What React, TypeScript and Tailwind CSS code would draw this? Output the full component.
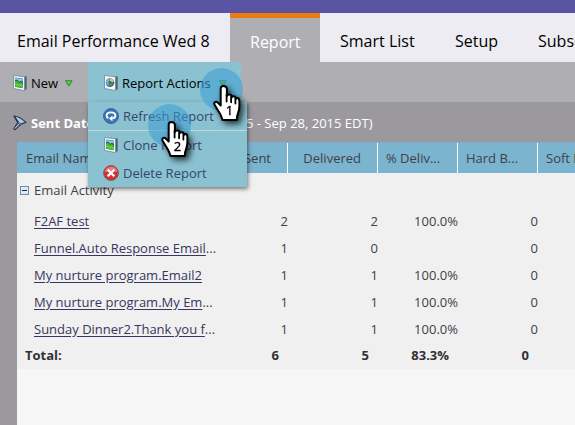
import type { ReactNode } from "react";

const rows = [
  { name: "F2AF test", more: false, values: ["2", "2", "100.0%", "0"] },
  { name: "Funnel.Auto Response Email", more: true, values: ["1", "0", "", "0"] },
  { name: "My nurture program.Email2", more: false, values: ["1", "1", "100.0%", "0"] },
  { name: "My nurture program.My Em", more: true, values: ["1", "1", "100.0%", "0"] },
  { name: "Sunday Dinner2.Thank you f", more: true, values: ["1", "1", "100.0%", "0"] },
];

const columns = "grid w-[621px] shrink-0 grid-cols-[181px_90px_90px_80px_80px_100px]";

function PictureIcon({ globe = false }: { globe?: boolean }) {
  return (
    <svg width="14" height="16" viewBox="0 0 14 16" className="shrink-0">
      <path d="M.5.5 11 1.7l2.5-.4v12.9L11 15.5.5 13.5z" fill="#f4f8fb" stroke="#70879a" strokeWidth=".8" />
      <path d="M11.3 1.8v13.4l2.2-1.3V1.4z" fill="#4c6272" />
      {globe ? (
        <g>
          <circle cx="6" cy="7.6" r="4.3" fill="#2a609c" />
          <path d="M2 6.5Q2.5 3.6 5 3.4L6 5 4.5 7.3l.7 3.7Q2 9.8 2 6.5z" fill="#7fb4d8" />
          <path d="M6 3.3Q9 3.5 10 6L8.4 7.6 6 6z" fill="#d4ce51" />
          <path d="m5.5 8 3.5.2-.8 2.3-2.3 1z" fill="#4c9b3c" />
        </g>
      ) : (
        <g>
          <path d="m1.9 2.6 8 1v9.6l-8-1.4z" fill="#3c78a8" />
          <path d="m2.2 3 7.4 1v2.5L8 5.5 6.5 7 4.2 4.7l-2 1.1z" fill="#8bcae8" />
          <path d="m2 6.2 2-1 2.3 2.5L8 6.5l1.8 2v4.6L2 11.7z" fill="#48b92d" />
          <path d="m2 6 2-1 2.4 2.4L8 6.2l1.8 2.3" fill="none" stroke="#185548" strokeWidth=".9" />
          <path d="m2 9 3 1.3 2-.5 2.8 2" stroke="#85df4b" strokeWidth=".9" fill="none" />
        </g>
      )}
    </svg>
  );
}

function DownArrow() {
  return (
    <svg width="8" height="7" viewBox="0 0 8 7" className="shrink-0">
      <path d="M.5.5h6.6L4.3 5.8h-.9z" fill="#3fa337" stroke="#3f9238" strokeWidth=".9" />
      <path d="M2 1.2h3.6L3.8 4.3z" fill="#70cc4c" />
    </svg>
  );
}

function Pointer({ number, className }: { number: string; className: string }) {
  return (
    <div className={`pointer-events-none absolute size-[43px] rounded-full bg-[#3a9fd5]/55 ${className}`}>
      <svg width="42" height="48" viewBox="0 0 42 48" className="absolute top-[16px] left-[12px] overflow-visible drop-shadow-[3px_3px_3px_rgba(0,0,0,0.75)]">
        <path
          d="M11.2 2Q8.7 2 8.7 4.5v17L6 18.8Q4.3 17 2.8 18.2q-1.2 1.2.2 3.3l5 8.2q1.6 3 2.5 6.3h14.2q.2-4 1.5-7.3 1.2-3 1.2-6.7v-5Q27.2 14 25.4 14q-1.2 0-1.7 1v-.8q0-2-2-2-1.7 0-2.1 1.2v-.7q0-2.1-2.3-2.1-2 0-2.4 1.5V4.5Q14.5 2 11.2 2z"
          fill="white"
          stroke="black"
          strokeWidth="2"
          strokeLinejoin="round"
        />
        <path d="M14.6 10.5v7M19.1 12.8v5.5M23.4 15v4.5" stroke="black" strokeWidth="1.8" strokeLinecap="round" />
        <text x="17.5" y="31" textAnchor="middle" fontFamily="Noto Sans, sans-serif" fontSize="13" fill="black" stroke="black" strokeWidth=".3">
          {number}
        </text>
      </svg>
    </div>
  );
}

function MenuItem({ icon, children, className }: { icon: ReactNode; children: ReactNode; className: string }) {
  return (
    <div className={`flex items-center pl-[15px] ${className}`}>
      <span className="flex w-5 items-center">{icon}</span>
      <span>{children}</span>
    </div>
  );
}

function ActionsMenu() {
  return (
    <div className="relative z-10 h-10 w-[153px] bg-[#8ac2d2]">
      <div className="flex h-10 items-center pt-[2px] pl-4 text-black">
        <PictureIcon globe />
        <span className="ml-[4px] w-[97px]">Report Actions</span>
        <DownArrow />
      </div>
      <div className="absolute top-10 left-0 h-[85px] w-[159px] bg-[#8ac2d2] text-[#35466c] shadow-[1px_2px_4px_rgba(0,0,0,0.5)]">
        <MenuItem
          className="h-[29px] border-b border-[#bdd9d6]"
          icon={
            <svg width="16" height="16" viewBox="0 0 16 16">
              <circle cx="8" cy="8" r="7.5" fill="#3b74b5" stroke="#3767a3" />
              <path d="M5.4 10.2Q3.6 9.3 3.6 7.5 3.8 4.4 8 4.4t4.4 3.1q0 2.7-3 2.8" fill="none" stroke="white" strokeWidth="1.9" />
              <path d="M9.5 7.5v6L6 10.5z" fill="white" />
            </svg>
          }
        >
          Refresh Report
        </MenuItem>
        <MenuItem className="-mt-px h-[29px]" icon={<span className="ml-[1px]"><PictureIcon /></span>}>
          Clone Report
        </MenuItem>
        <MenuItem
          className="h-7"
          icon={
            <svg width="16" height="16" viewBox="0 0 16 16">
              <circle cx="8" cy="8" r="7.4" fill="#cf3434" stroke="#87595e" />
              <path d="M1.8 7Q3 2 8 1.8T14.2 7Q8 5 1.8 7z" fill="#e8807c" />
              <path d="m4.7 4.7 6.6 6.6m0-6.6-6.6 6.6" stroke="white" strokeWidth="2.3" />
            </svg>
          }
        >
          Delete Report
        </MenuItem>
      </div>
      <Pointer number="1" className="top-[6px] left-[112px]" />
      <Pointer number="2" className="top-[42px] left-[60px]" />
    </div>
  );
}

export default function App() {
  return (
    <div className="flex h-[425px] w-[575px] flex-col overflow-hidden bg-[#9b999e] font-['Open_Sans',sans-serif] text-[13px] leading-[18px] text-[#404047]">
      <div className="h-[13px] shrink-0 bg-[#5a54a4]" />
      <nav className="flex h-[49px] shrink-0 bg-[#edecf2] pt-px text-[16px] whitespace-nowrap text-black">
        <div className="flex w-[230px] shrink-0 items-center pt-[6px] pl-[17px]">Email Performance Wed 8</div>
        <div className="-mt-px flex w-[90px] shrink-0 items-center border-t-5 border-[#ec7b16] bg-[#afaeb3] pt-[3px] pl-5 text-white">Report</div>
        <div className="flex items-center pt-[6px] pl-5">
          <span className="w-[115px]">Smart List</span>
          <span className="w-[83px]">Setup</span>
          <span>Subscribe</span>
        </div>
      </nav>

      <div className="flex h-10 shrink-0 bg-[#afaeb3]">
        <div className="flex w-[88px] items-center pt-[2px] pl-[13px] text-black">
          <PictureIcon />
          <span className="ml-[4px] w-[34px]">New</span>
          <DownArrow />
        </div>
        <ActionsMenu />
      </div>

      <div className="flex h-10 shrink-0 items-center pt-[2px] pl-[13px] whitespace-nowrap text-white">
        <svg width="14" height="16" viewBox="0 0 14 16">
          <path d="M.7.8Q7 1.2 13.3 7.4L8.5 9.2 2 15 .5 14l4-6.5z" fill="#495e7b" stroke="#2d3b50" />
          <path d="M2 1.8Q6.5 2.5 11.5 7L7.5 8.2 4.9 6z" fill="#b7cbe0" />
          <path d="m6.5 8.5-4.6 5" stroke="#c7d3e2" />
          <path d="m1.5 1.5 3.8 5.7" stroke="#1c2d45" strokeWidth="1.2" />
        </svg>
        <span className="ml-[4px] font-bold">Sent Date:</span>
        <span className="ml-auto w-[329px]">5 - Sep 28, 2015 EDT)</span>
      </div>

      <main className="ml-[17px] flex min-h-0 grow flex-col overflow-hidden bg-[#f6f6f6]">
        <div className={`${columns} h-[31px] items-stretch bg-[#7bb4ce] pt-px`}>
          <div className="flex items-center pl-[9px]">Email Name</div>
          <div className="flex items-center justify-end border-r border-white pr-4">Sent</div>
          <div className="flex items-center justify-end border-r border-white pr-4">Delivered</div>
          <div className="flex items-center border-r border-white pl-[8px]">% Deliv...</div>
          <div className="flex items-center border-r border-white pl-[8px]">Hard B...</div>
          <div className="flex items-center pl-[8px]">Soft B...</div>
        </div>
        <div className="h-[196px] w-[621px] shrink-0 bg-[#f0f0f0]">
          <div className="flex h-[34px] items-center pl-[3px]">
            <svg width="9" height="9" viewBox="0 0 9 9">
              <rect x=".5" y=".5" width="8" height="8" fill="#e1eaf4" stroke="#688ab3" />
              <path d="M2 4.5h5" stroke="#17283d" />
            </svg>
            <span className="ml-[5px]">Email Activity</span>
          </div>
          {rows.map((row) => (
            <div key={row.name} className={`${columns} h-[27px] items-center`}>
              <div className="pl-[17px] whitespace-nowrap">
                <span className="text-[#37365f] underline decoration-[#37365f] underline-offset-2">{row.name}</span>
                {row.more && "..."}
              </div>
              {row.values.map((value, i) => (
                <div key={i} className="text-right">{value}</div>
              ))}
            </div>
          ))}
          <div className={`${columns} h-[26px] items-center font-bold text-[#303035]`}>
            <div className="pl-[8px]">Total:</div>
            <div className="pr-[9px] text-right">6</div>
            <div className="pr-[9px] text-right">5</div>
            <div className="pr-[9px] text-right">83.3%</div>
            <div className="pr-[9px] text-right">0</div>
          </div>
        </div>
      </main>
    </div>
  );
}
